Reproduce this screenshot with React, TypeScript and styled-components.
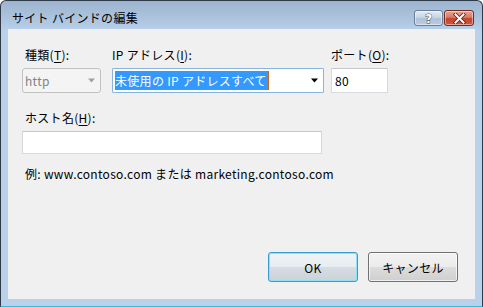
import React from "react";
import styled, { createGlobalStyle } from "styled-components";

const Global = createGlobalStyle`
  html, body { margin: 0; padding: 0; background: #ffffff; }
  body { font-family: "Noto Sans CJK JP", "Noto Sans", sans-serif; font-size: 12px; color: #000; letter-spacing: 0.3px; }
  #root { width: 483px; height: 307px; }
`;

const Window = styled.div`
  box-sizing: border-box;
  width: 483px;
  height: 307px;
  border: 1px solid #2f3a46;
  border-bottom-color: #3fb6d4;
  border-radius: 6px 6px 0 0;
  background: linear-gradient(to bottom, #9cb4cf 0px, #b1c8e2 22px, #b9d1ea 30px, #b9d1ea 100%);
  display: flex;
  flex-direction: column;
  overflow: hidden;
`;

const TitleBar = styled.div`
  height: 28px;
  display: flex;
  align-items: flex-start;
  padding: 0 8px 0 11px;
`;

const Title = styled.div`
  flex: 1;
  margin-top: 9px;
  height: 16px;
  line-height: 16px;
  font-size: 12px;
  color: #000;
`;

const CaptionButtons = styled.div`
  display: flex;
  gap: 1px;
  margin-top: 9px;
`;

const CapButton = styled.div<{ $close?: boolean }>`
  box-sizing: border-box;
  width: ${(p) => (p.$close ? 30 : 29)}px;
  height: 16px;
  border-radius: 3px;
  border: 1px solid ${(p) => (p.$close ? "#6f2c22" : "#6c7f96")};
  background: ${(p) =>
    p.$close
      ? "linear-gradient(to bottom, #e8a598 0%, #d67a68 45%, #c4432b 55%, #cf5a40 100%)"
      : "linear-gradient(to bottom, #e3ebf4 0%, #c8d6e6 45%, #adc1d9 55%, #bccde2 100%)"};
  box-shadow: inset 0 0 0 1px rgba(255, 255, 255, 0.45);
  display: flex;
  align-items: center;
  justify-content: center;
`;

const Client = styled.div`
  flex: 1;
  margin: 0 7px 7px 7px;
  background: #f0f0f0;
  display: flex;
  flex-direction: column;
  padding: 18px 17px 17px 14px;
  box-sizing: border-box;
`;

const Row = styled.div`
  display: flex;
  align-items: flex-start;
`;

const Field = styled.div<{ $w: number; $ml?: number }>`
  width: ${(p) => p.$w}px;
  margin-left: ${(p) => p.$ml ?? 0}px;
  display: flex;
  flex-direction: column;
`;

const HostField = styled(Field)`
  margin-top: 17px;
`;

const Label = styled.div<{ $indent?: number }>`
  height: 16px;
  line-height: 16px;
  padding-left: ${(p) => p.$indent ?? 0}px;
  margin-bottom: 5px;
  white-space: nowrap;
  font-size: 12px;
  u { text-decoration: underline; text-underline-offset: 2px; }
`;

const Combo = styled.div<{ $disabled?: boolean; $focus?: boolean }>`
  box-sizing: border-box;
  height: 25px;
  border: 1px solid ${(p) => (p.$disabled ? "#c2c2c2" : p.$focus ? "#8ab4e0" : "#abadb3")};
  border-radius: ${(p) => (p.$disabled ? 3 : 1)}px;
  background: ${(p) => (p.$disabled ? "#f4f4f4" : "#ffffff")};
  display: flex;
  align-items: center;
  padding: 0 4px 0 1px;
  color: ${(p) => (p.$disabled ? "#838383" : "#000")};
`;

const ComboText = styled.div`
  flex: 1;
  display: flex;
  align-items: center;
  height: 19px;
  padding-left: 1px;
`;

const Selection = styled.span`
  background: #3399ff;
  color: #fff;
  height: 19px;
  line-height: 19px;
  padding: 0 1px 0 0;
  white-space: nowrap;
`;

const Caret = styled.span`
  width: 1px;
  height: 19px;
  background: #c46a1c;
`;

const TextBox = styled.div<{ $h: number }>`
  box-sizing: border-box;
  height: ${(p) => p.$h}px;
  border: 1px solid #d6d9de;
  border-top-color: #c4c7cc;
  border-radius: 1px;
  background: #ffffff;
  display: flex;
  align-items: center;
  padding-left: 3px;
`;

const Example = styled.div`
  margin-top: 12px;
  padding-left: 3px;
  height: 16px;
  line-height: 16px;
  white-space: nowrap;
`;

const ButtonRow = styled.div`
  margin-top: auto;
  display: flex;
  justify-content: flex-end;
  gap: 10px;
`;

const Button = styled.div<{ $default?: boolean }>`
  box-sizing: border-box;
  width: 90px;
  height: 30px;
  border-radius: 3px;
  border: 1px solid ${(p) => (p.$default ? "#3c9ad0" : "#707070")};
  background: ${(p) =>
    p.$default
      ? "linear-gradient(to bottom, #eef3f6 0%, #e6ecf0 50%, #d6dde2 50%, #cad3d9 100%)"
      : "linear-gradient(to bottom, #f2f2f2 0%, #ebebeb 50%, #dddddd 50%, #cfcfcf 100%)"};
  box-shadow: ${(p) =>
    p.$default ? "inset 0 0 0 1px #8fe0f6" : "inset 0 0 0 1px rgba(255,255,255,0.7)"};
  display: flex;
  align-items: center;
  justify-content: center;
  font-size: 12px;
`;

const Arrow = ({ color }: { color: string }) => (
  <svg width="9" height="5" viewBox="0 0 9 5">
    <path d="M1 0.5 L8 0.5 L4.5 4.5 Z" fill={color} />
  </svg>
);

export default function App() {
  return (
    <>
      <Global />
      <Window>
        <TitleBar>
          <Title>サイト バインドの編集</Title>
          <CaptionButtons>
            <CapButton>
              <svg width="10" height="12" viewBox="0 0 10 12">
                <text
                  x="5"
                  y="10.5"
                  textAnchor="middle"
                  fontFamily="DejaVu Sans"
                  fontWeight="bold"
                  fontSize="12"
                  fill="#ffffff"
                  stroke="#34465c"
                  strokeWidth="0.9"
                  paintOrder="stroke"
                >
                  ?
                </text>
              </svg>
            </CapButton>
            <CapButton $close>
              <svg width="13" height="11" viewBox="0 0 13 11">
                <path d="M2.5 1.5 L10.5 9.5 M10.5 1.5 L2.5 9.5" stroke="#5a1e14" strokeWidth="3.6" strokeLinecap="square" />
                <path d="M2.5 1.5 L10.5 9.5 M10.5 1.5 L2.5 9.5" stroke="#ffffff" strokeWidth="2" strokeLinecap="square" />
              </svg>
            </CapButton>
          </CaptionButtons>
        </TitleBar>
        <Client>
          <Row>
            <Field $w={79}>
              <Label $indent={3}>
                種類(<u>T</u>):
              </Label>
              <Combo $disabled>
                <ComboText>http</ComboText>
                <Arrow color="#a0a0a0" />
              </Combo>
            </Field>
            <Field $w={212} $ml={11}>
              <Label>
                IP アドレス(<u>I</u>):
              </Label>
              <Combo $focus>
                <ComboText>
                  <Selection>未使用の IP アドレスすべて</Selection>
                  <Caret />
                </ComboText>
                <Arrow color="#000000" />
              </Combo>
            </Field>
            <Field $w={57} $ml={7}>
              <Label>
                ポート(<u>O</u>):
              </Label>
              <TextBox $h={25}>80</TextBox>
            </Field>
          </Row>
          <HostField $w={300}>
            <Label $indent={3}>
              ホスト名(<u>H</u>):
            </Label>
            <TextBox $h={23} />
          </HostField>
          <Example>例: www.contoso.com または marketing.contoso.com</Example>
          <ButtonRow>
            <Button $default>OK</Button>
            <Button>キャンセル</Button>
          </ButtonRow>
        </Client>
      </Window>
    </>
  );
}
